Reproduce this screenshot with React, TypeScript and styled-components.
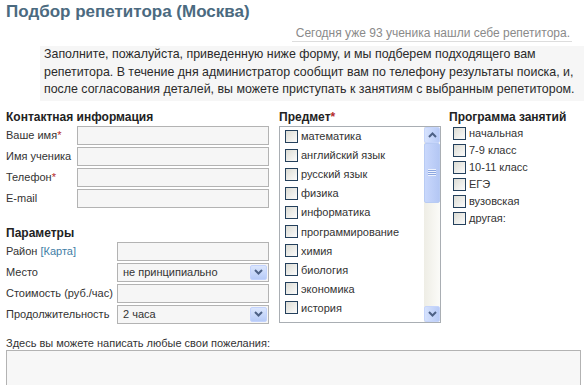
import React from "react";
import styled, { createGlobalStyle } from "styled-components";

const GlobalStyle = createGlobalStyle`
  html, body {
    margin: 0;
    padding: 0;
    background: #ffffff;
  }
  body {
    font-family: "Liberation Sans", Arial, sans-serif;
    color: #333333;
    overflow: hidden;
  }
`;

const subjects = [
  "математика",
  "английский язык",
  "русский язык",
  "физика",
  "информатика",
  "программирование",
  "химия",
  "биология",
  "экономика",
  "история",
];

const programs = ["начальная", "7-9 класс", "10-11 класс", "ЕГЭ", "вузовская", "другая:"];

const Chevron = ({ up }: { up?: boolean }) => (
  <svg width="9" height="6" viewBox="0 0 9 6" style={up ? { transform: "rotate(180deg)" } : undefined}>
    <polyline points="1,1 4.5,4.5 8,1" fill="none" stroke="#4d6185" strokeWidth="2" />
  </svg>
);

const App = () => {
  return (
    <Page>
      <GlobalStyle />
      <Title>Подбор репетитора (Москва)</Title>
      <CounterLine>
        <Counter>Сегодня уже 93 ученика нашли себе репетитора.</Counter>
      </CounterLine>
      <Intro>
        Заполните, пожалуйста, приведенную ниже форму, и мы подберем подходящего вам
        <br />
        репетитора. В течение дня администратор сообщит вам по телефону результаты поиска, и,
        <br />
        после согласования деталей, вы можете приступать к занятиям с выбранным репетитором.
      </Intro>

      <FormGrid>
        <Column>
          <Heading>Контактная информация</Heading>
          <Rows>
            <Row>
              <Label>
                Ваше имя<Req>*</Req>
              </Label>
              <TextInput $width={192} />
            </Row>
            <Row>
              <Label>Имя ученика</Label>
              <TextInput $width={192} />
            </Row>
            <Row>
              <Label>
                Телефон<Req>*</Req>
              </Label>
              <TextInput $width={192} />
            </Row>
            <Row>
              <Label>E-mail</Label>
              <TextInput $width={192} />
            </Row>
          </Rows>

          <Heading $spaced>Параметры</Heading>
          <Rows>
            <Row>
              <Label>
                Район <MapLink>[Карта]</MapLink>
              </Label>
              <TextInput $width={152} />
            </Row>
            <Row>
              <Label>Место</Label>
              <FakeSelect $width={152}>
                <span>не принципиально</span>
                <SelectButton>
                  <Chevron />
                </SelectButton>
              </FakeSelect>
            </Row>
            <Row>
              <Label>Стоимость (руб./час)</Label>
              <TextInput $width={152} />
            </Row>
            <Row>
              <Label>Продолжительность</Label>
              <FakeSelect $width={152}>
                <span>2 часа</span>
                <SelectButton>
                  <Chevron />
                </SelectButton>
              </FakeSelect>
            </Row>
          </Rows>
        </Column>

        <Column>
          <Heading>
            Предмет<Req>*</Req>
          </Heading>
          <ListBox>
            <ListItems>
              {subjects.map((s) => (
                <SubjectItem key={s}>
                  <Check />
                  {s}
                </SubjectItem>
              ))}
            </ListItems>
            <ScrollBar>
              <ScrollButton>
                <Chevron up />
              </ScrollButton>
              <Thumb>
                <Grip />
              </Thumb>
              <Track />
              <ScrollButton>
                <Chevron />
              </ScrollButton>
            </ScrollBar>
          </ListBox>
        </Column>

        <Column>
          <Heading $tight>Программа занятий</Heading>
          {programs.map((p) => (
            <ProgramItem key={p}>
              <Check />
              {p}
            </ProgramItem>
          ))}
        </Column>
      </FormGrid>

      <WishLabel>Здесь вы можете написать любые свои пожелания:</WishLabel>
      <Wishes />
    </Page>
  );
};

export default App;

const Page = styled.div`
  width: 588px;
  height: 385px;
  overflow: hidden;
  padding: 2px 0 0 6px;
  box-sizing: border-box;
`;

const Title = styled.h1`
  margin: 0;
  font-size: 17px;
  line-height: 20px;
  font-weight: bold;
  color: #4b6a80;
`;

const CounterLine = styled.div`
  display: flex;
  justify-content: flex-end;
  margin-top: 4px;
  padding-right: 16px;
  font-size: 12px;
  line-height: 14px;
`;

const Counter = styled.span`
  font-size: 12px;
  line-height: 14px;
  color: #8a8a8a;
  border-bottom: 1px solid #dddddd;
  padding: 0 2px 1px 4px;
`;

const Intro = styled.p`
  margin: 4px 4px 0 34px;
  padding: 0 0 2px 4px;
  background: #f6f6f6;
  font-size: 12.4px;
  line-height: 17.5px;
  color: #2a2a2a;
  white-space: nowrap;
`;

const FormGrid = styled.div`
  display: grid;
  grid-template-columns: 263px 162px auto;
  column-gap: 10px;
  margin-top: 8px;

  & > :last-child {
    margin-left: -2px;
  }
`;

const Column = styled.div`
  display: flex;
  flex-direction: column;
`;

const Heading = styled.div<{ $spaced?: boolean; $tight?: boolean }>`
  font-size: 12px;
  font-weight: bold;
  line-height: 16px;
  color: #222222;
  margin-top: ${(p) => (p.$spaced ? "17px" : "0")};
  margin-bottom: ${(p) => (p.$tight ? "0" : "1px")};
`;

const Req = styled.span`
  color: #b52a2a;
`;

const Rows = styled.div`
  display: flex;
  flex-direction: column;
  gap: 2px;
`;

const Row = styled.div`
  display: flex;
  justify-content: space-between;
  align-items: center;
  height: 19px;
`;

const Label = styled.span`
  font-size: 11px;
  color: #333333;
  white-space: nowrap;
`;

const MapLink = styled.span`
  color: #3f7ea6;
`;

const TextInput = styled.input<{ $width: number }>`
  width: ${(p) => p.$width}px;
  height: 19px;
  box-sizing: border-box;
  border: 1px solid #b3b3b3;
  background: #f6f6f6;
  padding: 0 4px;
  margin: 0;
  outline: none;
`;

const FakeSelect = styled.div<{ $width: number }>`
  width: ${(p) => p.$width}px;
  height: 19px;
  box-sizing: border-box;
  border: 1px solid #b3b3b3;
  background: #f6f6f6;
  display: flex;
  align-items: center;
  justify-content: space-between;
  padding: 0 1px 0 5px;
  font-size: 11px;
  color: #333333;
`;

const SelectButton = styled.span`
  width: 17px;
  height: 15px;
  box-sizing: border-box;
  border: 1px solid #c3d3fd;
  border-radius: 2px;
  background: linear-gradient(#dbe6fd, #b7cbf7);
  display: flex;
  align-items: center;
  justify-content: center;
`;

const ListBox = styled.div`
  display: flex;
  height: 197px;
  box-sizing: border-box;
  border: 1px solid #a9aeb3;
  background: #ffffff;
`;

const ListItems = styled.div`
  flex: 1;
  padding: 0 0 0 5px;
  overflow: hidden;
`;

const Check = styled.span`
  flex: none;
  width: 13px;
  height: 13px;
  box-sizing: border-box;
  border: 1px solid #24405c;
  background: linear-gradient(135deg, #dcdcd4, #fbfbfb);
`;

const SubjectItem = styled.div`
  display: flex;
  align-items: center;
  gap: 3px;
  height: 19.1px;
  font-size: 11px;
  color: #333333;
  white-space: nowrap;
`;

const ProgramItem = styled.div`
  display: flex;
  align-items: center;
  gap: 3px;
  height: 17px;
  padding-left: 4px;
  font-size: 11px;
  color: #333333;
  white-space: nowrap;
`;

const ScrollBar = styled.div`
  width: 16px;
  display: flex;
  flex-direction: column;
  background: linear-gradient(90deg, #eeede5, #fbfbf8);
`;

const ScrollButton = styled.div`
  height: 16px;
  box-sizing: border-box;
  border: 1px solid #c6d5fb;
  border-radius: 2px;
  background: linear-gradient(90deg, #d6e2fd, #b8cbf7);
  display: flex;
  align-items: center;
  justify-content: center;
`;

const Thumb = styled.div`
  height: 60px;
  box-sizing: border-box;
  border: 1px solid #b8cbf3;
  border-radius: 2px;
  background: linear-gradient(90deg, #c9d8fc, #b4c7f4);
  display: flex;
  align-items: center;
  justify-content: center;
`;

const Grip = styled.span`
  width: 8px;
  height: 7px;
  background: repeating-linear-gradient(#eef3fe 0 1px, #8da7e0 1px 2px);
`;

const Track = styled.div`
  flex: 1;
`;

const WishLabel = styled.div`
  margin-top: 12px;
  font-size: 11px;
  line-height: 14px;
  color: #333333;
`;

const Wishes = styled.textarea`
  display: block;
  width: 575px;
  height: 60px;
  box-sizing: border-box;
  margin: 0;
  border: 1px solid #b3b3b3;
  background: #f7f7f7;
  resize: none;
  outline: none;
`;
